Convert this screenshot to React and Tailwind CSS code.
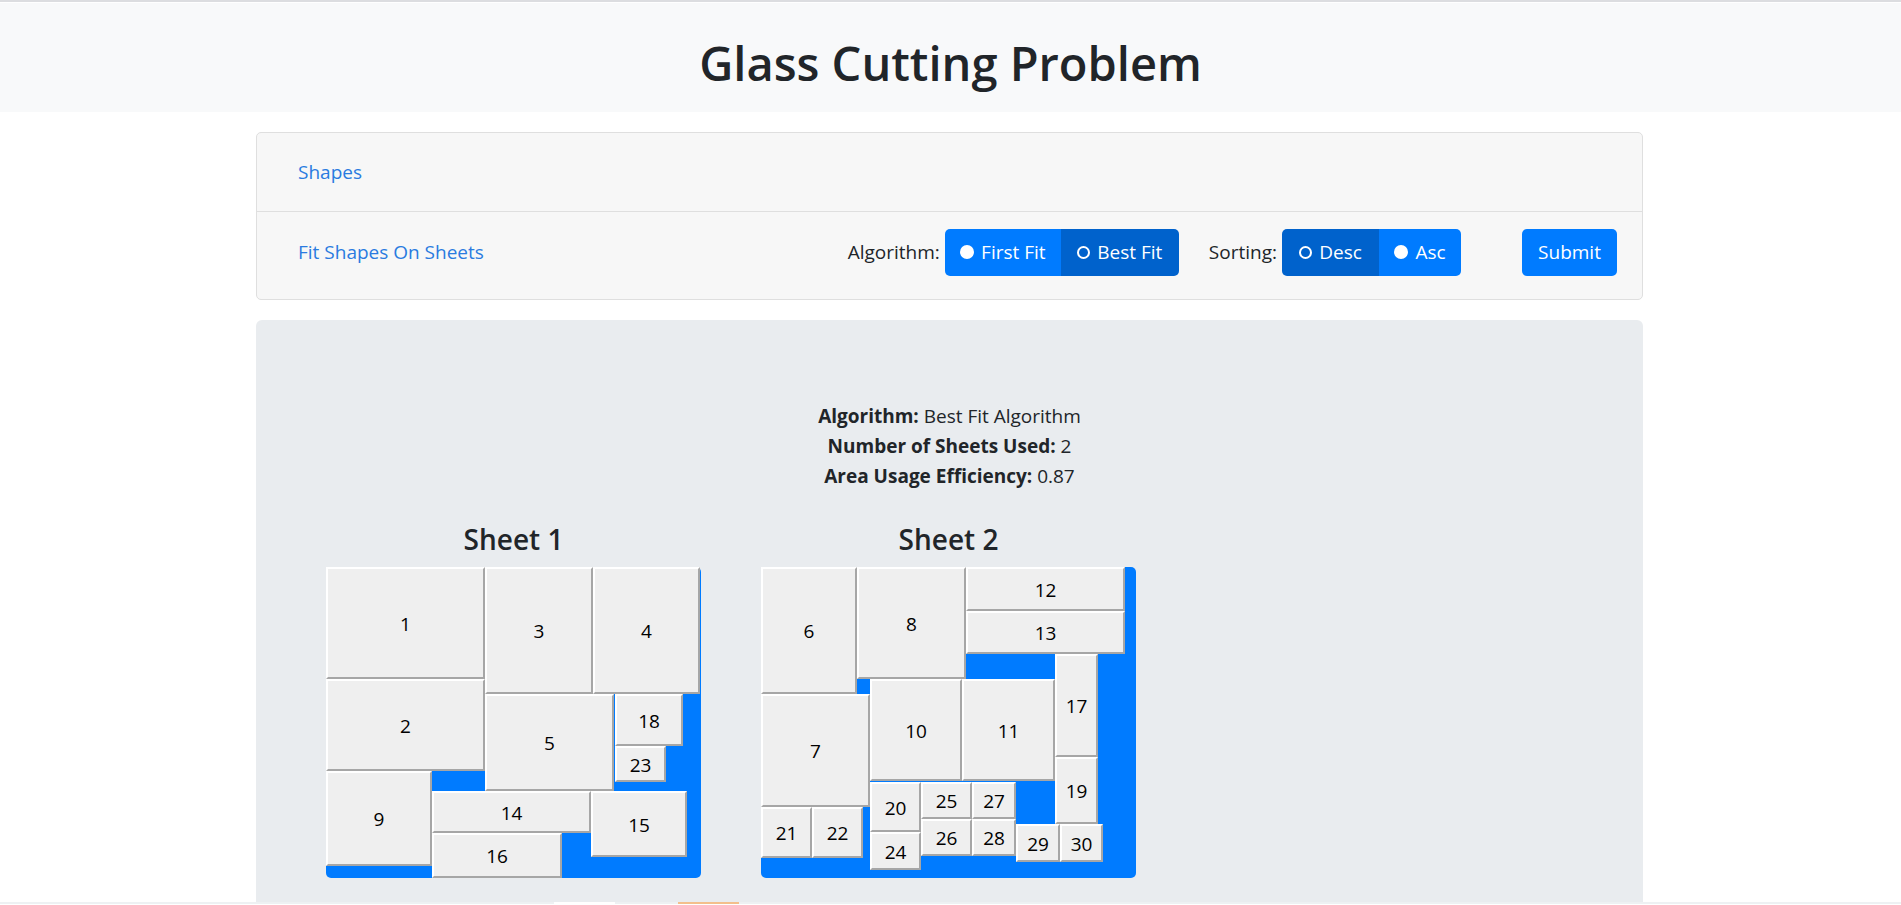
import React from "react";

const sheetOne = [
  ["1", 0, 0, 159, 112],
  ["2", 0, 112, 159, 92],
  ["3", 159, 0, 108, 127],
  ["4", 267, 0, 107, 127],
  ["5", 159, 127, 129, 97],
  ["18", 289, 127, 68, 52],
  ["23", 289, 179, 51, 36],
  ["9", 0, 204, 106, 95],
  ["14", 106, 224, 159, 42],
  ["16", 106, 266, 130, 45],
  ["15", 265, 224, 96, 66],
];

const sheetTwo = [
  ["6", 0, 0, 96, 127],
  ["8", 96, 0, 109, 112],
  ["12", 205, 0, 159, 44],
  ["13", 205, 44, 159, 43],
  ["7", 0, 127, 109, 113],
  ["10", 109, 112, 92, 102],
  ["11", 201, 112, 93, 102],
  ["17", 294, 87, 43, 103],
  ["19", 294, 190, 43, 67],
  ["21", 0, 240, 51, 51],
  ["22", 51, 240, 51, 51],
  ["20", 109, 215, 51, 50],
  ["24", 109, 265, 51, 38],
  ["25", 160, 215, 51, 37],
  ["26", 160, 252, 51, 37],
  ["27", 211, 215, 44, 37],
  ["28", 211, 252, 44, 37],
  ["29", 255, 257, 44, 38],
  ["30", 299, 257, 43, 38],
];

function Radio({ checked }) {
  if (checked) {
    return <span className="inline-block w-[13px] h-[13px] rounded-full border-2 border-white" />;
  }
  return <span className="inline-block w-[14px] h-[14px] rounded-full bg-white" />;
}

function Toggle({ label, checked, width, first, last }) {
  return (
    <div
      className={
        "h-[47px] flex items-center justify-center gap-[7px] text-white " +
        (checked ? "bg-[#0062cc] " : "bg-[#007bff] ") +
        (first ? "rounded-l-[5px] " : "") +
        (last ? "rounded-r-[5px] " : "")
      }
      style={{ width }}
    >
      <Radio checked={checked} />
      <span>{label}</span>
    </div>
  );
}

function Sheet({ title, shapes }) {
  return (
    <div className="flex flex-col items-center">
      <h4 className="text-[28px] font-semibold leading-[36px] text-[#212529] mb-[10px]">{title}</h4>
      <div className="relative w-[375px] h-[311px] bg-[#007bff] rounded-[5px]">
        {shapes.map(([label, x, y, w, h]) => (
          <div
            key={label}
            className="absolute flex items-center justify-center bg-[#efefef] border-2 border-t-white border-l-white border-r-[#a6a6a6] border-b-[#a6a6a6] text-[19px] text-black pt-[2px]"
            style={{ left: x, top: y, width: w, height: h }}
          >
            {label}
          </div>
        ))}
      </div>
    </div>
  );
}

export default function App() {
  return (
    <div className="h-[905px] overflow-hidden bg-white font-['Open_Sans','Noto_Sans',sans-serif] text-[19px] text-[#212529] flex flex-col">
      <div className="h-[2px] bg-[#dcdde0]" />
      <div className="h-px bg-white" />
      <header className="h-[109px] bg-[#f8f9fa] flex items-center justify-center pt-[10px]">
        <h1 className="text-[47px] font-semibold text-[#212529] leading-[60px]">Glass Cutting Problem</h1>
      </header>

      <div className="w-[1387px] ml-[256px] mt-[20px] border border-[#dfdfdf] rounded-[5px] bg-[#f7f7f7]">
        <div className="h-[78px] flex items-center pl-[41px] text-[#2a7be0]">Shapes</div>
        <div className="h-[88px] flex items-center pl-[41px] pr-[25px] pb-[7px] border-t border-[#dfdfdf]">
          <span className="text-[#2a7be0]">Fit Shapes On Sheets</span>
          <div className="ml-auto flex items-center">
            <span className="mr-[5px]">Algorithm:</span>
            <div className="flex">
              <Toggle label="First Fit" width={116} first />
              <Toggle label="Best Fit" width={118} checked last />
            </div>
            <span className="ml-[30px] mr-[5px]">Sorting:</span>
            <div className="flex">
              <Toggle label="Desc" width={97} checked first />
              <Toggle label="Asc" width={82} last />
            </div>
            <button className="ml-[61px] w-[95px] h-[47px] rounded-[5px] bg-[#007bff] text-white">Submit</button>
          </div>
        </div>
      </div>

      <div className="w-[1387px] ml-[256px] mt-[20px] bg-[#e9ecef] rounded-t-[6px] pt-[81px] h-[582px] shrink-0">
        <div className="text-center leading-[30px]">
          <div><b className="font-bold">Algorithm:</b> Best Fit Algorithm</div>
          <div><b className="font-bold">Number of Sheets Used:</b> 2</div>
          <div><b className="font-bold">Area Usage Efficiency:</b> 0.87</div>
        </div>
        <div className="flex gap-[60px] pl-[70px] mt-[30px]">
          <Sheet title="Sheet 1" shapes={sheetOne} />
          <Sheet title="Sheet 2" shapes={sheetTwo} />
        </div>
      </div>
      <div className="h-[2px] shrink-0 bg-[#eef1f3] flex">
        <div className="ml-[554px] w-[61px] bg-white" />
        <div className="ml-[63px] w-[61px] bg-[#f3bf8c]" />
      </div>
    </div>
  );
}
